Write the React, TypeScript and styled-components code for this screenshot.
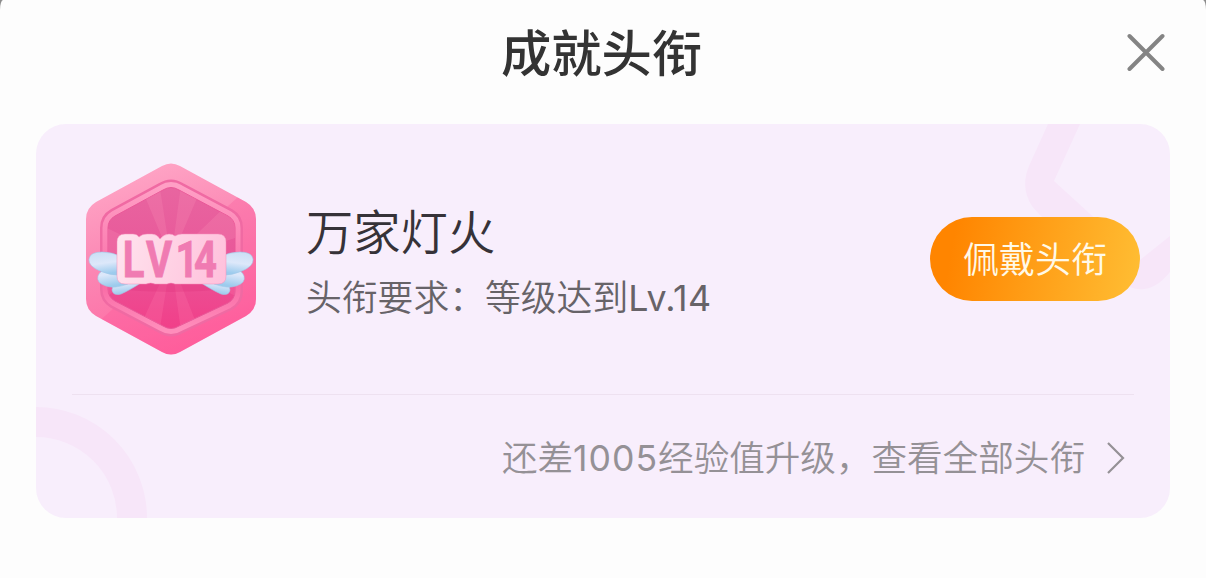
import React from 'react'
import styled, { createGlobalStyle } from 'styled-components'

const GlobalStyle = createGlobalStyle`
  * {
    box-sizing: border-box;
  }
  body {
    margin: 0;
    background: #8c8c8c;
    font-family: 'Liberation Sans', 'Noto Sans CJK SC', sans-serif;
  }
`

const Sheet = styled.main`
  height: 578px;
  padding: 0 36px;
  background: #fdfdfd;
  border-radius: 3px 3px 0 0 / 10px 10px 0 0;
  overflow: hidden;
`

const Header = styled.header`
  display: grid;
  grid-template-columns: 48px 1fr 48px;
  align-items: center;
  height: 124px;
  padding-bottom: 20px;
`

const Title = styled.h1`
  grid-column: 2;
  margin: 0;
  padding: 0 3px 4px 0;
  text-align: center;
  font: 500 50.3px/60px 'Noto Sans CJK SC', sans-serif;
  color: #333;
`

const CloseButton = styled.button`
  display: flex;
  justify-content: center;
  width: 48px;
  padding: 0;
  border: 0;
  background: none;
`

const Card = styled.section`
  position: relative;
  height: 394px;
  padding: 0 36px;
  border-radius: 30px;
  background: #f8eefc;
  overflow: hidden;
`

const Pattern = styled.svg`
  position: absolute;
  inset: 0;
`

const Summary = styled.div`
  position: relative;
  display: flex;
  align-items: center;
  height: 271px;
  margin-right: -6px;
  padding: 0 0 1px 14px;
  &::after {
    content: '';
    position: absolute;
    left: 0;
    right: 6px;
    bottom: 0;
    height: 1px;
    background: #eee1f0;
  }
`

const Info = styled.div`
  flex: 1;
  margin-left: 50px;
  padding-top: 11px;
`

const Name = styled.h2`
  margin: 0;
  font: 350 47.3px/62px 'Noto Sans CJK SC', sans-serif;
  color: #363238;
`

const Requirement = styled.p`
  margin: 4px 0 0;
  font: 350 35.8px/66px Inter, 'Noto Sans CJK SC', sans-serif;
  color: #676368;
  white-space: nowrap;
`

const Level = styled.span`
  font-weight: 400;
  letter-spacing: 0.4px;
`

const WearButton = styled.button`
  width: 210px;
  height: 84px;
  padding: 0 0 5px;
  border: 0;
  border-radius: 42px;
  background: linear-gradient(100deg, #ff8500 12%, #ffbd33 98%);
  color: #fff9e8;
  font: 350 36px/50px 'Noto Sans CJK SC', sans-serif;
`

const MoreLink = styled.a`
  position: relative;
  display: flex;
  align-items: center;
  justify-content: flex-end;
  gap: 21px;
  height: 123px;
  padding: 4px 8px 0 0;
  font: 350 35.6px/50px Inter, 'Noto Sans CJK SC', sans-serif;
  color: #959196;
  white-space: nowrap;
  svg {
    margin-bottom: 2px;
  }
`

const Points = styled.span`
  font-weight: 400;
  letter-spacing: 1px;
`

const BadgeText = styled.text`
  font: 700 50px Roboto, sans-serif;
`

const HEX = 'M76 3 Q85 -2 94 3 L160 39 Q170 45 170 56 V136 Q170 147 160 153 L94 189 Q85 194 76 189 L10 153 Q0 147 0 136 V56 Q0 45 10 39 Z'
const INNER = 'M77 27 Q85 22 93 27 L142 53 Q149 57 149 65 V128 Q149 136 142 140 L93 163 Q85 168 77 163 L29 138 Q22 134 22 126 V65 Q22 57 29 53 Z'

const Wing = () => (
  <g stroke="#a3c9ea" strokeWidth=".6">
    <path d="M30 110 L58 118 Q44 127 35 131 Q27 133 26 127 Z" fill="url(#wing)" />
    <path d="M42 98 V121 Q28 126 20 123 Q10 120 12 113 Q14 106 26 106 Z" fill="url(#wing)" />
    <path d="M36 91 V112 Q24 113 14 108 Q2 103 3 96 Q4 89 16 89 Q27 89 36 94 Z" fill="url(#wing)" />
  </g>
)

const Badge = () => (
  <svg width="170" height="192" viewBox="0 0 170 192">
    <defs>
      <linearGradient id="rim" x1=".3" y1="0" x2=".6" y2="1">
        <stop offset="0" stopColor="#ffa6c6" />
        <stop offset=".45" stopColor="#fb86b3" />
        <stop offset="1" stopColor="#ff649f" />
      </linearGradient>
      <linearGradient id="core" x1="0" y1="0" x2="0" y2="1">
        <stop offset="0" stopColor="#e865a0" />
        <stop offset=".5" stopColor="#e95799" />
        <stop offset="1" stopColor="#f13f89" />
      </linearGradient>
      <linearGradient id="edge" x1="0" y1="0" x2="0" y2="1">
        <stop offset="0" stopColor="#ff9fc5" />
        <stop offset=".7" stopColor="#f96ca6" />
        <stop offset="1" stopColor="#ff8dbb" />
      </linearGradient>
      <linearGradient id="wing" x1="0" y1="0" x2=".2" y2="1">
        <stop offset="0" stopColor="#c9def5" />
        <stop offset=".55" stopColor="#dde8fa" />
        <stop offset="1" stopColor="#9ccbed" />
      </linearGradient>
      <linearGradient id="plate" gradientUnits="userSpaceOnUse" x1="30" y1="80" x2="140" y2="110">
        <stop offset="0" stopColor="#ffe3ee" />
        <stop offset=".4" stopColor="#ffd5e6" />
        <stop offset="1" stopColor="#ffc1dc" />
      </linearGradient>
      <clipPath id="hex"><path d={HEX} /></clipPath>
      <clipPath id="inner"><path d={INNER} /></clipPath>
    </defs>
    <path d={HEX} fill="url(#rim)" />
    <path d="M170 18 L0 170 V192 H170 Z" fill="#ff3d8d" opacity=".2" clipPath="url(#hex)" />
    <path d={INNER} fill="none" stroke="#f06aa3" strokeWidth="16" />
    <path d={INNER} fill="none" stroke="url(#edge)" strokeWidth="11" />
    <path d={INNER} fill="url(#core)" stroke="#e95898" strokeWidth="1" />
    <g clipPath="url(#inner)">
      <path d="M85 96 L45 0 H70 Z M85 96 L98 0 H126 Z M85 96 L145 38 L170 68 Z M85 96 L0 55 V88 Z" fill="#ff9bc0" opacity=".2" />
      <path d="M85 96 L170 108 V145 Z M85 96 L122 190 H98 Z M85 96 L70 190 H42 Z M85 96 L0 145 V110 Z" fill="#ff76ad" opacity=".25" />
      <path d="M30 119 H140 V126 Q85 132 30 126 Z" fill="#dc2c76" opacity=".25" />
    </g>
    <Wing />
    <g transform="translate(170 0) scale(-1 1)"><Wing /></g>
    <path
      d="M39 71 H47 Q51 71 53 74 Q56 71 61 71 H66 Q71 71 74 76 Q78 71 83 71 Q87 71 89 73 Q92 71 96 71 H132 Q140 71 140 79 V113 Q140 121 132 121 H89 Q85 119 81 121 H69 Q65 119 60 121 H39 Q31 121 31 113 V79 Q31 71 39 71 Z"
      fill="url(#plate)"
      stroke="#f58fbb"
      strokeWidth=".5"
    />
    <BadgeText transform="scale(.8 1)" x="46 75 112 135" y="114" fill="#f07bb2" stroke="#f07bb2" strokeWidth=".8">
      LV14
    </BadgeText>
  </svg>
)

const App: React.FC = () => {
  return (
    <>
      <GlobalStyle />
      <Sheet>
        <Header>
          <Title>成就头衔</Title>
          <CloseButton aria-label="关闭">
            <svg width="38" height="38" viewBox="0 0 38 38" fill="none" stroke="#848484" strokeWidth="4" strokeLinecap="round">
              <path d="M2.5 3 L35.5 36 M35.5 3 L2.5 36" />
            </svg>
          </CloseButton>
        </Header>
        <Card>
          <Pattern width="1134" height="394" viewBox="0 0 1134 394">
            <path
              d="M1012 0 L993 42 Q984 64 996 82 Q1003 91 1014 100 L1082 156 Q1110 178 1134 148 V112 L1104 136 L1098 130 L1018 57 L1044 0 Z"
              fill="#f7e6f9"
            />
            <circle cx="0" cy="394" r="96" fill="none" stroke="#f7e6f9" strokeWidth="30" />
          </Pattern>
          <Summary>
            <Badge />
            <Info>
              <Name>万家灯火</Name>
              <Requirement>
                头衔要求：等级达到<Level>Lv.14</Level>
              </Requirement>
            </Info>
            <WearButton>佩戴头衔</WearButton>
          </Summary>
          <MoreLink>
            <span>
              还差<Points>1005</Points>经验值升级，查看全部头衔
            </span>
            <svg width="20" height="34" viewBox="0 0 20 34" fill="none" stroke="#959196" strokeWidth="2.2">
              <path d="M2 2 L17 17 L2 32" />
            </svg>
          </MoreLink>
        </Card>
      </Sheet>
    </>
  )
}

export default App
